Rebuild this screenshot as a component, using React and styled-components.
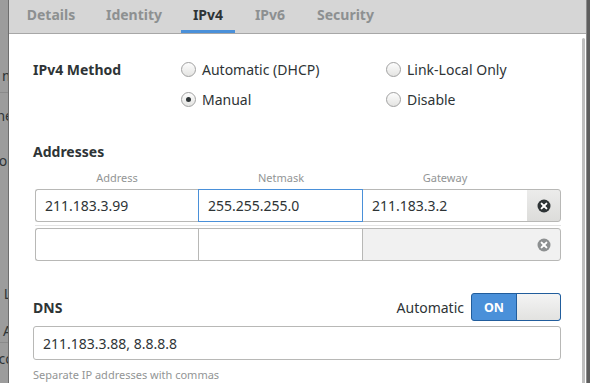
import React from 'react'
import styled, { createGlobalStyle } from 'styled-components'

const GlobalStyle = createGlobalStyle`
  html, body {
    margin: 0;
    padding: 0;
    width: 590px;
    height: 383px;
    overflow: hidden;
    background: #9a9a9a;
  }
  body {
    font-family: "Noto Sans", "Open Sans", sans-serif;
    color: #2e3436;
  }
`

const Screen = styled.div`
  display: flex;
  width: 590px;
  height: 383px;
`

const BackWindow = styled.div`
  width: 8px;
  flex: none;
  background: #9c9c9c;
  border-right: 1px solid #6e6e6e;
  overflow: hidden;
  display: flex;
  flex-direction: column;
`

const BackItem = styled.div`
  height: ${p => p.h}px;
  flex: none;
  display: flex;
  align-items: center;
  justify-content: flex-end;
  font-size: 14px;
  color: #2e3436;
  white-space: nowrap;
  border-bottom: ${p => (p.line ? '1px solid #8a8a8a' : 'none')};
  box-sizing: border-box;

  span {
    margin-right: ${p => p.shift || 0}px;
  }
`

const RightEdge = styled.div`
  width: 3px;
  flex: none;
  background: #5e5e5e;
  border-left: 1px solid #8d8d8d;
`

const Dialog = styled.div`
  flex: 1;
  display: flex;
  flex-direction: column;
  background: #fff;
  min-width: 0;
`

const TabBar = styled.div`
  height: 33px;
  flex: none;
  background: #d6d6d6;
  border-bottom: 1px solid #a7a7a7;
  display: flex;
  gap: 8px;
  padding-left: 6px;
`

const Tab = styled.div`
  width: ${p => p.w}px;
  flex: none;
  display: flex;
  align-items: center;
  justify-content: center;
  padding-bottom: 5px;
  box-sizing: border-box;
  font-size: 14px;
  font-weight: 700;
  color: ${p => (p.active ? '#2e3436' : '#8d9091')};
  box-shadow: ${p => (p.active ? 'inset 0 -3px 0 #4a90d9' : 'none')};
`

const Body = styled.div`
  flex: 1;
  display: flex;
  min-height: 0;
`

const Content = styled.div`
  flex: 1;
  padding: 20px 21px 0 24px;
  display: flex;
  flex-direction: column;

  & > * {
    flex: none;
  }
`

const Scrollbar = styled.div`
  width: 3px;
  flex: none;
  margin: 4px 1px 0 0;
  background: #bfbfbf;
  border-radius: 2px 2px 0 0;
`

const MethodGrid = styled.div`
  display: grid;
  grid-template-columns: 148px 205px 1fr;
  grid-auto-rows: 30px;
  align-items: center;
`

const SectionLabel = styled.div`
  font-size: 14px;
  font-weight: 700;
  color: #2e3436;
`

const RadioRow = styled.label`
  display: flex;
  align-items: center;
  gap: 6px;
  font-size: 14px;
  color: #2e3436;
`

const RadioCircle = styled.span`
  width: 13px;
  height: 13px;
  border-radius: 50%;
  border: 1px solid #a1a1a1;
  background: linear-gradient(#fdfdfd, #e4e4e2);
  display: flex;
  align-items: center;
  justify-content: center;

  &::after {
    content: '';
    width: 5px;
    height: 5px;
    border-radius: 50%;
    background: ${p => (p.checked ? '#2e3436' : 'transparent')};
  }
`

const AddressesBlock = styled.div`
  margin-top: 28px;
  display: flex;
  flex-direction: column;
  padding-left: 2px;
`

const AddressesTitle = styled(SectionLabel)`
  margin-left: -2px;
`

const ColumnHeads = styled.div`
  display: grid;
  grid-template-columns: 164px 164px 164px 34px;
  margin: 8px 0 3px;
  height: 17px;
  align-items: center;
`

const ColumnHead = styled.div`
  text-align: center;
  font-size: 11px;
  color: #929595;
`

const EntryRow = styled.div`
  display: grid;
  grid-template-columns: 164px 164px 164px 34px;
  height: 33px;
  margin-top: ${p => p.mt || 0}px;
`

const Cell = styled.div`
  box-sizing: border-box;
  display: flex;
  align-items: center;
  padding-left: 9px;
  font-size: 14px;
  color: #2e3436;
  background: ${p => (p.disabled ? '#f1f1f1' : '#fff')};
  border: 1px solid ${p => (p.focused ? '#4a90d9' : '#b8b8b6')};
  border-right-width: ${p => (p.focused ? 1 : 0)}px;
  margin-left: ${p => (p.first ? 0 : -1)}px;
  border-radius: ${p => (p.first ? '3px 0 0 3px' : '0')};
  position: relative;
  z-index: ${p => (p.focused ? 1 : 0)};
`

const RemoveButton = styled.div`
  box-sizing: border-box;
  display: flex;
  align-items: center;
  justify-content: center;
  border: 1px solid #b8b8b6;
  border-radius: 0 3px 3px 0;
  background: ${p =>
    p.disabled ? '#f1f1f1' : 'linear-gradient(#ececeb, #dcdcda)'};
  color: ${p => (p.disabled ? '#8d9091' : '#2e3436')};
  margin-left: -1px;
`

const RowDivider = styled.div`
  height: 1px;
  background: #e4e4e4;
  margin-top: 3px;
`

const DnsHeader = styled.div`
  margin-top: 32px;
  display: flex;
  align-items: center;
  justify-content: space-between;
  height: 28px;
`

const AutoGroup = styled.div`
  display: flex;
  align-items: center;
  gap: 7px;
  font-size: 14px;
  color: #2e3436;
`

const Switch = styled.div`
  display: flex;
  width: 90px;
  height: 28px;
  box-sizing: border-box;
  border: 1px solid #215d9c;
  border-radius: 3px;
  background: #4a90d9;
  overflow: hidden;
`

const SwitchLabel = styled.div`
  width: 44px;
  display: flex;
  align-items: center;
  justify-content: center;
  color: #fff;
  font-size: 12.5px;
  font-weight: 700;
`

const SwitchKnob = styled.div`
  flex: 1;
  border-left: 1px solid #215d9c;
  border-radius: 0 2px 2px 0;
  background: linear-gradient(#f4f4f4, #e2e2e0);
`

const DnsEntry = styled.div`
  margin-top: 5px;
  height: 34px;
  box-sizing: border-box;
  border: 1px solid #b8b8b6;
  border-radius: 3px;
  display: flex;
  align-items: center;
  padding-left: 9px;
  font-size: 14px;
  color: #2e3436;
`

const Hint = styled.div`
  margin-top: 7px;
  font-size: 11px;
  color: #929595;
`

const ClearIcon = () => (
  <svg width="14" height="14" viewBox="0 0 14 14">
    <circle cx="7" cy="7" r="6.5" fill="currentColor" />
    <path
      d="M4.6 4.6 L9.4 9.4 M9.4 4.6 L4.6 9.4"
      stroke="#fff"
      strokeWidth="2"
      strokeLinecap="round"
    />
  </svg>
)

const backItems = [
  { h: 58 },
  { h: 35, text: 'm', shift: -7, line: true },
  { h: 45, text: 'ne', shift: -5 },
  { h: 45, text: 'or', shift: -5 },
  { h: 85, text: '' },
  { h: 50, text: 'L', shift: -3 },
  { h: 25, text: 'A', shift: -4, line: true },
  { h: 30, text: 'cc', shift: -4 },
]

const tabs = [
  { name: 'Details', w: 72 },
  { name: 'Identity', w: 78 },
  { name: 'IPv4', w: 54, active: true },
  { name: 'IPv6', w: 54 },
  { name: 'Security', w: 81 },
]

const rows = [
  { address: '211.183.3.99', netmask: '255.255.255.0', gateway: '211.183.3.2' },
  { address: '', netmask: '', gateway: '', empty: true },
]

export default function App() {
  return (
    <>
      <GlobalStyle />
      <Screen>
        <BackWindow>
          {backItems.map((b, i) => (
            <BackItem key={i} h={b.h} shift={b.shift} line={b.line}>
              <span>{b.text}</span>
            </BackItem>
          ))}
        </BackWindow>
        <Dialog>
          <TabBar>
            {tabs.map(t => (
              <Tab key={t.name} w={t.w} active={t.active}>
                {t.name}
              </Tab>
            ))}
          </TabBar>
          <Body>
            <Content>
              <MethodGrid>
                <SectionLabel>IPv4 Method</SectionLabel>
                <RadioRow>
                  <RadioCircle />
                  Automatic (DHCP)
                </RadioRow>
                <RadioRow>
                  <RadioCircle />
                  Link-Local Only
                </RadioRow>
                <div />
                <RadioRow>
                  <RadioCircle checked />
                  Manual
                </RadioRow>
                <RadioRow>
                  <RadioCircle />
                  Disable
                </RadioRow>
              </MethodGrid>

              <AddressesBlock>
                <AddressesTitle>Addresses</AddressesTitle>
                <ColumnHeads>
                  <ColumnHead>Address</ColumnHead>
                  <ColumnHead>Netmask</ColumnHead>
                  <ColumnHead>Gateway</ColumnHead>
                  <div />
                </ColumnHeads>
                {rows.map((r, i) => (
                  <React.Fragment key={i}>
                    {i > 0 && <RowDivider />}
                    <EntryRow mt={i > 0 ? 2 : 0}>
                      <Cell first>{r.address}</Cell>
                      <Cell focused={i === 0}>{r.netmask}</Cell>
                      <Cell disabled={r.empty}>{r.gateway}</Cell>
                      <RemoveButton disabled={r.empty}>
                        <ClearIcon />
                      </RemoveButton>
                    </EntryRow>
                  </React.Fragment>
                ))}
              </AddressesBlock>

              <DnsHeader>
                <SectionLabel>DNS</SectionLabel>
                <AutoGroup>
                  Automatic
                  <Switch>
                    <SwitchLabel>ON</SwitchLabel>
                    <SwitchKnob />
                  </Switch>
                </AutoGroup>
              </DnsHeader>
              <DnsEntry>211.183.3.88, 8.8.8.8</DnsEntry>
              <Hint>Separate IP addresses with commas</Hint>
            </Content>
            <Scrollbar />
          </Body>
        </Dialog>
        <RightEdge />
      </Screen>
    </>
  )
}
